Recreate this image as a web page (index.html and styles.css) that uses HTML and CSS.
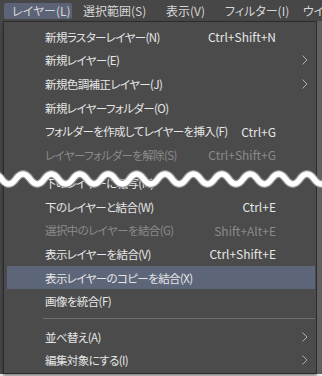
FILE: index.html
```html
<!DOCTYPE html>
<html lang="ja">
<head>
    <meta charset="UTF-8">
    <meta name="viewport" content="width=device-width, initial-scale=1.0">
    <title>レイヤー menu</title>
<link rel="stylesheet" href="styles.css">
</head>
<body>

<div class="screen">
    <nav class="menubar">
        <span class="menubar-item is-open">レイヤー(L)</span>
        <span class="menubar-item">選択範囲(S)</span>
        <span class="menubar-item">表示(V)</span>
        <span class="menubar-item">フィルター(I)</span>
        <span class="menubar-item">ウインドウ(W)</span>
    </nav>

    <div class="stage">
        <div class="side side-left"></div>

        <ul class="dropdown">
            <li class="item"><span class="label">新規ラスターレイヤー(N)</span><span class="key">Ctrl+Shift+N</span><span class="sub"></span></li>
            <li class="item"><span class="label">新規レイヤー(E)</span><span class="key"></span><span class="sub"><svg class="chev" width="6" height="10" viewBox="0 0 6 10"><path d="M0.5 0.5 L5 5 L0.5 9.5"/></svg></span></li>
            <li class="item"><span class="label">新規色調補正レイヤー(J)</span><span class="key"></span><span class="sub"><svg class="chev" width="6" height="10" viewBox="0 0 6 10"><path d="M0.5 0.5 L5 5 L0.5 9.5"/></svg></span></li>
            <li class="item"><span class="label">新規レイヤーフォルダー(O)</span><span class="key"></span><span class="sub"></span></li>
            <li class="item"><span class="label">フォルダーを作成してレイヤーを挿入(F)</span><span class="key">Ctrl+G</span><span class="sub"></span></li>
            <li class="item disabled"><span class="label">レイヤーフォルダーを解除(S)</span><span class="key">Ctrl+Shift+G</span><span class="sub"></span></li>

            <!-- the screenshot skips part of the menu here -->
            <li class="cut">
                <div class="item"><span class="label">下のレイヤーに転写(M)</span><span class="key"></span><span class="sub"></span></div>
                <svg class="wave" width="322" height="22" viewBox="0 0 322 22">
                    <path class="wave-edge" d="M-12.5 11 Q-5.4 1 1.7 11 T15.9 11 T30.1 11 T44.3 11 T58.5 11 T72.7 11 T86.9 11 T101.1 11 T115.3 11 T129.5 11 T143.7 11 T157.9 11 T172.1 11 T186.3 11 T200.5 11 T214.7 11 T228.9 11 T243.1 11 T257.3 11 T271.5 11 T285.7 11 T299.9 11 T314.1 11 T328.3 11 T342.5 11"/>
                    <path class="wave-fill" d="M-12.5 11 Q-5.4 1 1.7 11 T15.9 11 T30.1 11 T44.3 11 T58.5 11 T72.7 11 T86.9 11 T101.1 11 T115.3 11 T129.5 11 T143.7 11 T157.9 11 T172.1 11 T186.3 11 T200.5 11 T214.7 11 T228.9 11 T243.1 11 T257.3 11 T271.5 11 T285.7 11 T299.9 11 T314.1 11 T328.3 11 T342.5 11"/>
                </svg>
            </li>

            <li class="item"><span class="label">下のレイヤーと結合(W)</span><span class="key">Ctrl+E</span><span class="sub"></span></li>
            <li class="item disabled"><span class="label">選択中のレイヤーを結合(G)</span><span class="key">Shift+Alt+E</span><span class="sub"></span></li>
            <li class="item"><span class="label">表示レイヤーを結合(V)</span><span class="key">Ctrl+Shift+E</span><span class="sub"></span></li>
            <li class="item active"><span class="label">表示レイヤーのコピーを結合(X)</span><span class="key"></span><span class="sub"></span></li>
            <li class="item"><span class="label">画像を統合(F)</span><span class="key"></span><span class="sub"></span></li>
            <li class="sep"></li>
            <li class="item"><span class="label">並べ替え(A)</span><span class="key"></span><span class="sub"><svg class="chev" width="6" height="10" viewBox="0 0 6 10"><path d="M0.5 0.5 L5 5 L0.5 9.5"/></svg></span></li>
            <li class="item"><span class="label">編集対象にする(I)</span><span class="key"></span><span class="sub"><svg class="chev" width="6" height="10" viewBox="0 0 6 10"><path d="M0.5 0.5 L5 5 L0.5 9.5"/></svg></span></li>
        </ul>

        <div class="side side-right"></div>
    </div>
</div>

</body>
</html>
```

FILE: styles.css
```css
body{
    margin: 0;
    background-color: rgb(236, 236, 236);
    font-family: "Noto Sans CJK JP", "Noto Sans", sans-serif;
    font-size: 12px;
    font-feature-settings: "palt";
    color: rgb(230, 230, 230);
}
.screen{
    width: 322px;
    height: 376px;
    overflow: hidden;
}
.menubar{
    display: grid;
    grid-template-columns: 68px 80px 56px 75px auto;
    gap: 3px;
    height: 21px;
    padding: 3px 0 0 4px;
    box-sizing: border-box;
    background-color: rgb(71, 71, 71);
    white-space: nowrap;
    overflow: hidden;
}
.menubar-item{
    height: 16px;
    line-height: 16px;
    padding-left: 8px;
    color: rgb(214, 214, 214);
    border-radius: 2px;
}
.menubar-item.is-open{
    background-color: rgb(92, 99, 118);
}
.stage{
    display: flex;
}
.side{
    background-color: rgb(72, 72, 72);
}
.side-left{
    width: 3px;
}
.side-right{
    width: 5px;
    background-color: rgb(96, 96, 96);
}
.dropdown{
    list-style: none;
    margin: 0;
    width: 314px;
    box-sizing: border-box;
    padding: 3px 1px 1px 3px;
    background-color: rgb(75, 75, 75);
    border: 1px solid rgb(44, 44, 44);
    box-shadow: 0 2px 3px rgba(0, 0, 0, 0.45);
}
.item{
    display: grid;
    grid-template-columns: 1fr auto 39px;
    align-items: center;
    height: 23.6px;
    padding-left: 38px;
    white-space: nowrap;
}
.label{
    font-size: 11.5px;
    letter-spacing: -0.6px;
}
.item.disabled{
    color: rgb(138, 138, 138);
}
.item.active{
    background-color: rgb(93, 101, 121);
}
.key{
    text-align: right;
}
.sub{
    display: flex;
    justify-content: flex-end;
    padding-right: 7px;
}
.chev{
    display: block;
    fill: none;
    stroke: rgb(176, 176, 176);
    stroke-width: 1;
}
.sep{
    height: 12px;
    margin-left: 36px;
    background: linear-gradient(rgb(112, 112, 112), rgb(112, 112, 112)) no-repeat 0 5px / 100% 1px;
}
.cut{
    position: relative;
    padding-top: 4.8px;
}
.wave{
    position: absolute;
    left: -7px;
    top: 1px;
    fill: none;
}
.wave-edge{
    stroke: rgb(150, 150, 150);
    stroke-width: 8;
}
.wave-fill{
    stroke: rgb(255, 255, 255);
    stroke-width: 5.6;
}
```
